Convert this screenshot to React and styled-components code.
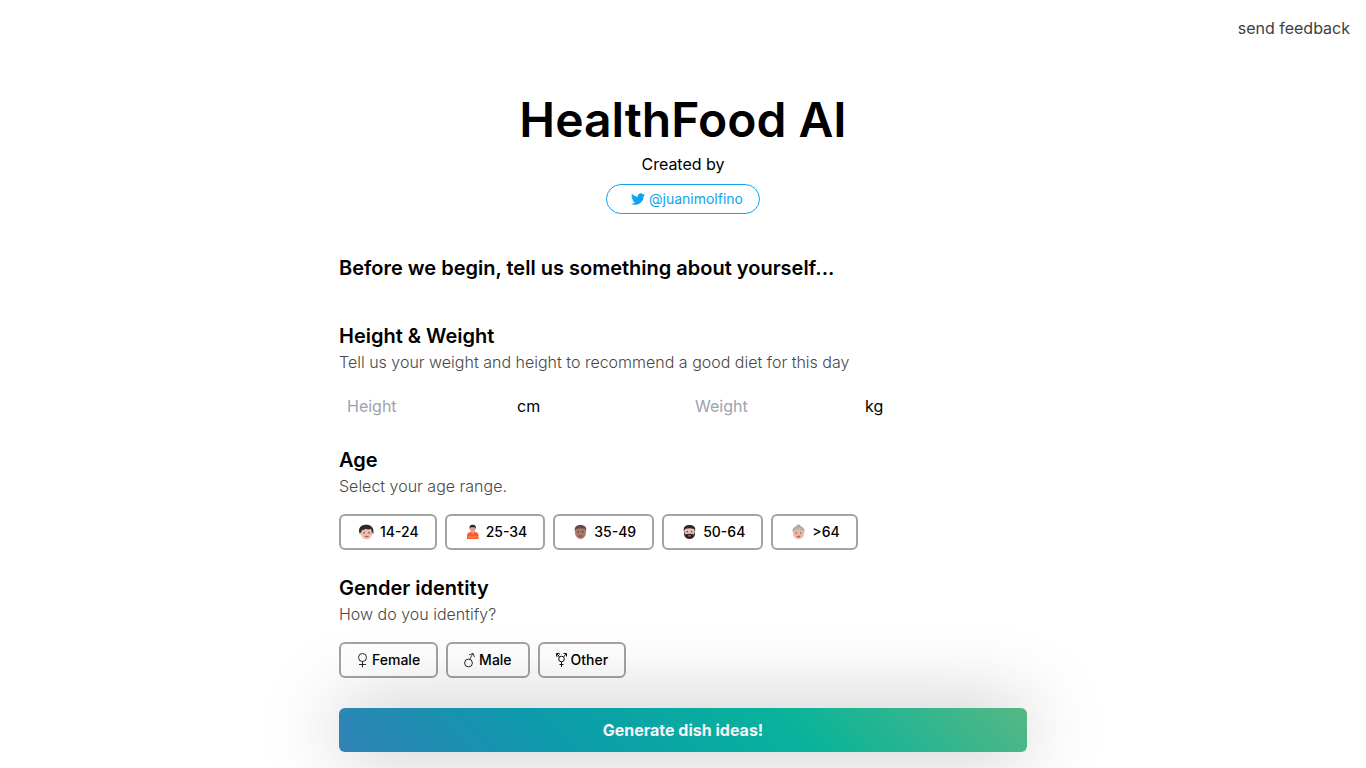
import React, { useState } from "react";
import styled, { createGlobalStyle } from "styled-components";
import { FaTwitter } from "react-icons/fa";

const GlobalStyle = createGlobalStyle`
  *,
  *::before,
  *::after {
    box-sizing: border-box;
  }

  body {
    margin: 0;
    background-color: #fff;
    color: #000;
    font-family: Inter, "Liberation Sans", sans-serif;
    font-size: 16px;
    line-height: 24px;
  }

  h1, h2, p {
    margin: 0;
  }

  button, input {
    font-family: inherit;
  }
`;

const Header = styled.header`
  display: flex;
  justify-content: flex-end;
  padding: 16px;
`;

const FeedbackLink = styled.a`
  color: #404040;
  text-decoration: none;
`;

const Main = styled.main`
  display: flex;
  flex-direction: column;
  max-width: 720px;
  margin: 0 auto;
  padding: 40px 16px 16px;
`;

const Hero = styled.div`
  display: flex;
  flex-direction: column;
  align-items: center;
  gap: 8px;
  margin-bottom: 40px;
`;

const Title = styled.h1`
  font-size: 48px;
  font-weight: 600;
  line-height: 48px;
  text-align: center;
`;

const Author = styled.a`
  display: flex;
  align-items: center;
  gap: 4px;
  padding: 4px 16px 4px 24px;
  border: 1px solid #0ea5e9;
  border-radius: 16px;
  color: #0ea5e9;
  font-size: 14px;
  line-height: 20px;
  text-decoration: none;
`;

const Heading = styled.h2`
  font-size: 20px;
  font-weight: 600;
  line-height: 28px;
`;

const Form = styled.form`
  display: flex;
  flex-direction: column;
  gap: 24px;
  margin-top: 40px;
`;

const Hint = styled.p`
  margin-bottom: 16px;
  color: #484848;
  font-weight: 300;
`;

const Fields = styled.div`
  display: grid;
  grid-template-columns: 1fr 1fr;
  gap: 8px;
`;

const Field = styled.label`
  display: flex;
  align-items: center;
  gap: 8px;
`;

const Input = styled.input`
  width: 50%;
  padding: 4px 8px;
  border: 0;
  background: transparent;
  font-size: 16px;
  line-height: 24px;

  &::placeholder {
    color: #9ca3af;
    opacity: 1;
  }
`;

const Options = styled.div`
  display: flex;
  flex-wrap: wrap;
  gap: 8px;
`;

const Option = styled.button`
  display: flex;
  align-items: center;
  gap: 4px;
  padding: 6px 16px;
  border: 2px solid ${({ $active }) => ($active ? "#0d9aac" : "#a3a3a3")};
  border-radius: 6px;
  background-color: #fff;
  color: #000;
  font-size: 14px;
  font-weight: 500;
  line-height: 20px;
  cursor: pointer;
`;

const Submit = styled.button`
  position: sticky;
  bottom: 16px;
  margin-top: 6px;
  padding: 10px 16px;
  border: 0;
  border-radius: 6px;
  background-image: linear-gradient(
    45deg,
    #3182b6,
    #0d9aac 30%,
    #07b39b 65%,
    #57b784
  );
  box-shadow: 0 0 80px rgba(0, 0, 0, 0.27);
  color: #f5f5f5;
  font-size: 16px;
  font-weight: 700;
  line-height: 24px;
  cursor: pointer;
`;

const Face = ({ skin, hair, children }) => (
  <svg width="19" height="16" viewBox="0 0 19 16" aria-hidden="true">
    <ellipse cx="9.5" cy="8.5" rx="5.5" ry="6.5" fill={skin} />
    <path d="M4 8C3 3 5 1 9.500 1s6.500 2 5.500 7l-1-3Q9.500 3.500 5 5z" fill={hair} />
    <circle cx="7.300" cy="7.700" r="0.7" fill="#3b2b2b" />
    <circle cx="11.7" cy="7.7" r="0.7" fill="#3b2b2b" />
    {children}
  </svg>
);

const Boy = () => (
  <svg width="19" height="16" viewBox="0 0 19 16" aria-hidden="true">
    <ellipse cx="9.5" cy="9" rx="5.8" ry="6.3" fill="#e9bdb0" />
    <circle cx="3.2" cy="9" r="1.3" fill="#dda99c" />
    <circle cx="15.8" cy="9" r="1.3" fill="#dda99c" />
    <path
      d="M2.2 8.500C1.200 4 4 1.200 8 .8c5-.5 9 2 8.500 7.700L15 8.500l-1-3.500-3 .5-2-.7-2 1-2 .2-1 2.500z"
      fill="#30272b"
    />
    <circle cx="7" cy="8.7" r="0.7" fill="#3b2b2b" />
    <circle cx="12" cy="8.7" r="0.7" fill="#3b2b2b" />
    <path d="M8 12.500h3.500" stroke="#c64c61" strokeWidth="1.2" />
  </svg>
);

const Person = () => (
  <svg width="19" height="16" viewBox="0 0 19 16" aria-hidden="true">
    <path d="M4 11.500q0-3.500 4-3.500h3.500q4 0 4 3.500V15H4z" fill="#ff5a2b" />
    <path d="M8.500 7h2.500v2.500l-1.300 1-1.200-1z" fill="#d49484" />
    <ellipse cx="9.7" cy="4.8" rx="2.7" ry="3.8" fill="#dda091" />
    <path d="M6.800 5C6 1.800 7.500.7 9.700.7s3.700 1.100 3 4.300l-1-1.800H7.800z" fill="#30272b" />
    <path d="M4.800 12.500l5 .8 5-.8" stroke="#f38a66" strokeWidth="1.2" fill="none" />
  </svg>
);

const Man = () => (
  <Face skin="#a8796c" hair="#684943">
    <path d="M7.500 11.800q2 .8 4 0" stroke="#963f58" strokeWidth="1.3" fill="none" />
  </Face>
);

const Bearded = () => (
  <Face skin="#e7bfae" hair="#30292b">
    <path
      d="M4 7.500l1.500 3Q9.500 9 13.500 10.500L15 7.500q.5 7.500-5.500 7.500T4 7.500z"
      fill="#292326"
    />
    <path d="M8 11.800h3" stroke="#d9546a" strokeWidth="1.3" />
  </Face>
);

const Elder = () => (
  <svg width="19" height="16" viewBox="0 0 19 16" aria-hidden="true">
    <circle cx="9.5" cy="2.6" r="2.2" fill="#a5a5a5" />
    <ellipse cx="9.5" cy="6.2" rx="6" ry="4.3" fill="#aaa" />
    <ellipse cx="9.5" cy="9.5" rx="5.4" ry="5.7" fill="#e7b9a4" />
    <path d="M4 8Q5 3 9.500 4T15 8Q12 5.500 9.500 5T4 8z" fill="#b1b1b1" />
    <circle cx="7.2" cy="9" r="0.7" fill="#65565b" />
    <circle cx="11.8" cy="9" r="0.7" fill="#65565b" />
    <path d="M8 12.500h3" stroke="#d83f68" strokeWidth="1.3" />
  </svg>
);

const Sign = ({ children }) => (
  <svg
    width="11"
    height="18"
    viewBox="0 0 11 18"
    fill="none"
    stroke="#111"
    aria-hidden="true"
  >
    {children}
  </svg>
);

const Female = () => (
  <Sign>
    <circle cx="5.5" cy="6.5" r="4" strokeWidth="0.9" />
    <path d="M5.500 10.500v6M2 13.500h7" strokeWidth="0.9" />
  </Sign>
);

const Male = () => (
  <Sign>
    <circle cx="4.5" cy="12" r="3.9" strokeWidth="0.9" />
    <path d="M5.800 8.300L8.800 2.500M5 4l4-1.700 1.500 4" strokeWidth="0.8" />
  </Sign>
);

const Other = () => (
  <Sign>
    <circle cx="5.5" cy="8" r="2.8" />
    <path d="M3.500 6L1 3M7.500 6L10 3M.5 5.500v-3h3M7.500 2.500h3v3M1.500 5.500l2-2M5.500 11v5M3.500 13.500h4" />
  </Sign>
);

const ages = [
  { label: "14-24", Icon: Boy },
  { label: "25-34", Icon: Person },
  { label: "35-49", Icon: Man },
  { label: "50-64", Icon: Bearded },
  { label: ">64", Icon: Elder },
];

const genders = [
  { label: "Female", Icon: Female },
  { label: "Male", Icon: Male },
  { label: "Other", Icon: Other },
];

const OptionList = ({ options, value, onChange }) => (
  <Options>
    {options.map(({ label, Icon }) => (
      <Option
        key={label}
        type="button"
        $active={value === label}
        aria-pressed={value === label}
        onClick={() => onChange(label)}
      >
        <Icon />
        {label}
      </Option>
    ))}
  </Options>
);

const App = () => {
  const [age, setAge] = useState(null);
  const [gender, setGender] = useState(null);

  return (
    <>
      <GlobalStyle />
      <Header>
        <FeedbackLink href="#feedback">send feedback</FeedbackLink>
      </Header>
      <Main>
        <Hero>
          <Title>HealthFood AI</Title>
          <p>Created by</p>
          <Author href="https://twitter.com/juanimolfino">
            <FaTwitter size={14} aria-hidden="true" />
            @juanimolfino
          </Author>
        </Hero>
        <Heading>Before we begin, tell us something about yourself...</Heading>
        <Form onSubmit={(e) => e.preventDefault()}>
          <section>
            <Heading>Height & Weight</Heading>
            <Hint>
              Tell us your weight and height to recommend a good diet for this
              day
            </Hint>
            <Fields>
              <Field>
                <Input name="height" placeholder="Height" />
                cm
              </Field>
              <Field>
                <Input name="weight" placeholder="Weight" />
                kg
              </Field>
            </Fields>
          </section>
          <section>
            <Heading>Age</Heading>
            <Hint>Select your age range.</Hint>
            <OptionList options={ages} value={age} onChange={setAge} />
          </section>
          <section>
            <Heading>Gender identity</Heading>
            <Hint>How do you identify?</Hint>
            <OptionList options={genders} value={gender} onChange={setGender} />
          </section>
          <Submit type="submit">Generate dish ideas!</Submit>
        </Form>
      </Main>
    </>
  );
};

export default App;
